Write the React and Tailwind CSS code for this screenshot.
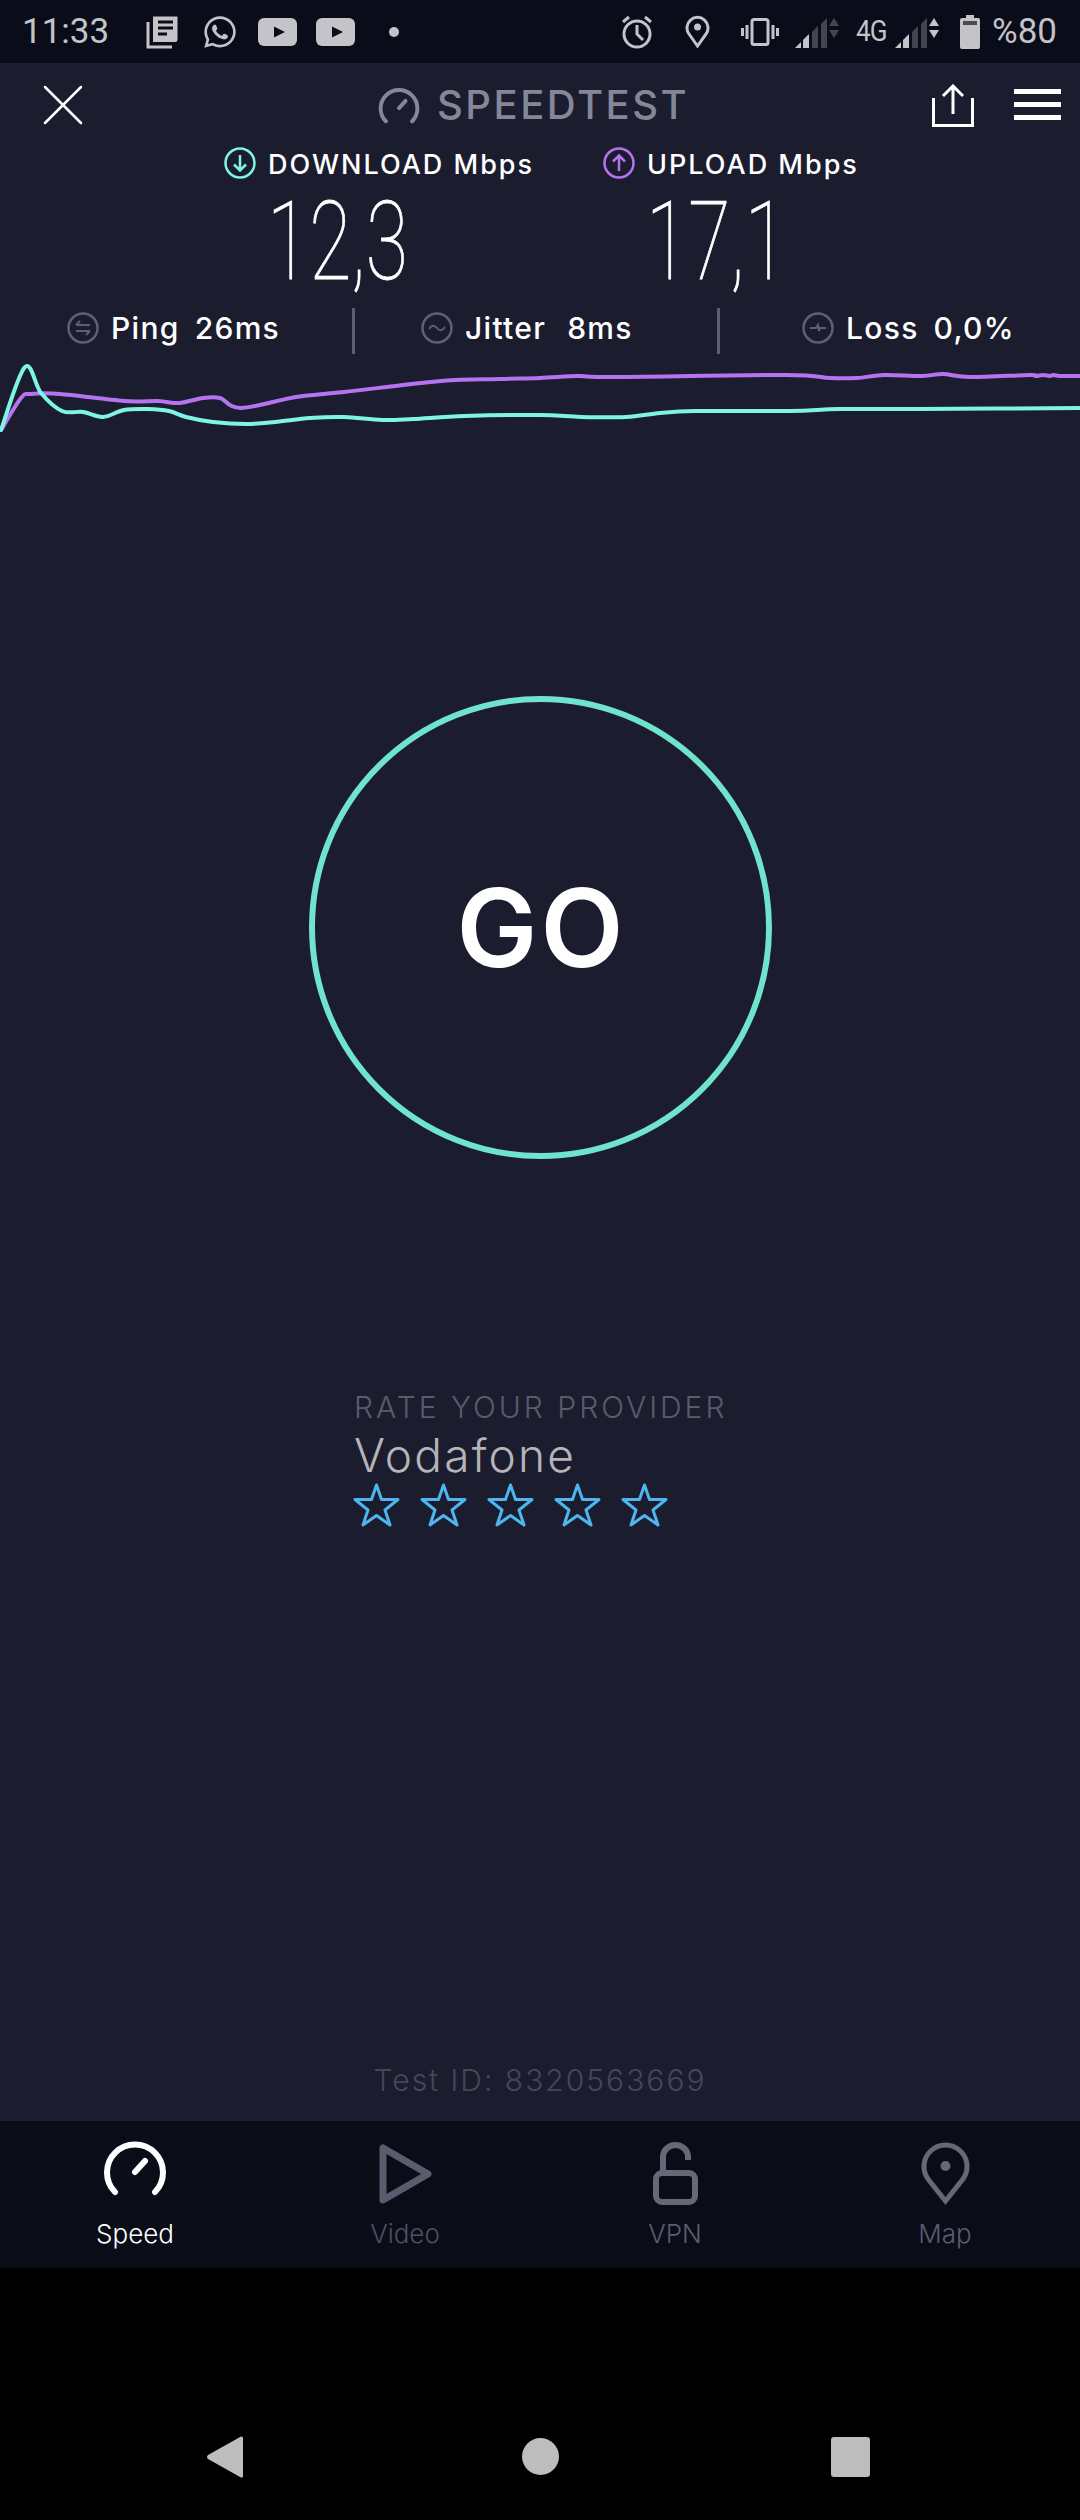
import { FaWhatsapp } from 'react-icons/fa';

const CYAN = [[1,430],[25,367],[41,393],[62,411],[83,412],[103,417],[124,410],[148,409],[169,411],[186,417],[213,422],[246,424],[275,422],[310,418],[344,417],[382,420],[413,419],[465,416],[540,415],[581,417],[626,417],[660,413],[695,411],[790,411],[840,409],[919,409],[1080,408]];
const PURPLE = [[1,430],[21,398],[31,394],[60,394],[124,401],[158,401],[179,403],[203,398],[220,398],[241,408],[296,397],[344,392],[441,381],[499,379],[540,378],[578,376],[610,377],[785,375],[830,378],[857,378],[884,375],[922,376],[943,374],[970,377],[1029,375],[1036,376],[1043,375],[1050,376],[1053,375],[1060,376],[1080,376]];

// smooth line through the points, y is page based so shift to chart top
const toPath = (pts) => {
  const p = pts.map(([x, y]) => [x, y - 360]);
  let d = `M${p[0][0]},${p[0][1]}`;
  for (let i = 0; i < p.length - 1; i++) {
    const a = p[i - 1] || p[i];
    const b = p[i];
    const c = p[i + 1];
    const e = p[i + 2] || c;
    d += ` C${b[0] + (c[0] - a[0]) / 6},${b[1] + (c[1] - a[1]) / 6} ${c[0] - (e[0] - b[0]) / 6},${c[1] - (e[1] - b[1]) / 6} ${c[0]},${c[1]}`;
  }
  return d;
};

const Gauge = ({ className }) => (
  <svg viewBox="0 0 64 56" className={className} fill="none" stroke="currentColor" strokeWidth="6" strokeLinecap="round">
    <path d="M12,52 A28,28 0 1 1 52,52" />
    <path d="M32,32 L42,21" />
  </svg>
);

const Youtube = () => (
  <svg viewBox="0 0 39 28" className="w-[39px] h-[28px]">
    <rect width="39" height="28" rx="6" fill="#c3c3c8" />
    <path d="M16,8.5 L27,14 L16,19.5 Z" fill="#0a0c1a" />
  </svg>
);

const Signal = ({ full }) => (
  <svg viewBox="0 0 44 33" className="w-[44px] h-[33px]">
    <path d="M0,33 L6,27 V33 Z" fill="#c3c3c8" />
    <path d="M8,25 L14,19 V33 H8 Z" fill="#c3c3c8" />
    <path d="M17,17 L23,11 V33 H17 Z" fill="#44454f" />
    <path d="M26,9 L32,3 V33 H26 Z" fill="#44454f" />
    <path d="M34,11 L39,3 L44,11 Z" fill={full ? '#c3c3c8' : '#44454f'} />
    <path d="M34,15 H44 L39,23 Z" fill={full ? '#c3c3c8' : '#44454f'} />
  </svg>
);

const StatusBar = () => (
  <div className="h-[63px] shrink-0 bg-[#0a0c1a] flex items-center text-[#c3c3c8] font-['Roboto',sans-serif]">
    <span className="ml-[22px] text-[35px] leading-none w-[124px]">11:33</span>
    <svg viewBox="0 0 33 34" className="w-[33px] h-[34px]" fill="none" stroke="#c3c3c8">
      <path d="M7,1.5 H31.5 V25 Q31.5,27 29,27 H7 Z" fill="#c3c3c8" stroke="none" />
      <path d="M12,7 H27 M12,13 H27 M12,19 H21" stroke="#0a0c1a" strokeWidth="3" />
      <path d="M2,7 V32 H26" strokeWidth="3" />
    </svg>
    <FaWhatsapp className="ml-[23px] w-[36px] h-[36px]" />
    <span className="ml-[20px]"><Youtube /></span>
    <span className="ml-[19px]"><Youtube /></span>
    <span className="ml-[34px] w-[10px] h-[10px] rounded-full bg-[#c3c3c8]" />
    <svg viewBox="0 0 32 34" className="ml-[222px] w-[32px] h-[34px]" fill="none" stroke="#c3c3c8" strokeWidth="3">
      <circle cx="16" cy="19" r="13" />
      <path d="M16,10 V19 L22,25 M2,7 L8,2 M30,7 L24,2" />
    </svg>
    <svg viewBox="0 0 25 33" className="ml-[32px] w-[25px] h-[33px]" fill="none" stroke="#c3c3c8" strokeWidth="3">
      <path d="M12.5,31 L4,19 A10.5,10.5 0 1 1 21,19 Z" />
      <circle cx="12.5" cy="12" r="3.5" fill="#c3c3c8" stroke="none" />
    </svg>
    <svg viewBox="0 0 38 28" className="ml-[31px] w-[38px] h-[28px]" fill="none" stroke="#c3c3c8" strokeWidth="3">
      <rect x="11" y="1.5" width="16" height="25" rx="2" />
      <path d="M6,7 V21 M1.5,10 V18 M32,7 V21 M36.5,10 V18" />
    </svg>
    <span className="ml-[16px]"><Signal /></span>
    <span className="ml-[17px] w-[34px] text-[29px] leading-none tracking-[-1px] scale-x-90 origin-left">4G</span>
    <span className="ml-[5px]"><Signal full /></span>
    <svg viewBox="0 0 20 34" className="ml-[21px] w-[20px] h-[34px]" fill="#c3c3c8">
      <path d="M6,0 H14 V3 H18 Q20,3 20,5 V32 Q20,34 18,34 H2 Q0,34 0,32 V5 Q0,3 2,3 H6 Z" />
      <rect x="3" y="6" width="14" height="4" fill="#4a4b55" />
    </svg>
    <span className="ml-[12px] text-[35px] leading-none">%80</span>
  </div>
);

const Toolbar = () => (
  <div className="h-[84px] flex items-center relative">
    <svg viewBox="0 0 40 40" className="ml-[43px] w-[40px] h-[40px]" stroke="white" strokeWidth="2.5" strokeLinecap="round">
      <path d="M2,2 L38,38 M38,2 L2,38" />
    </svg>
    <Gauge className="ml-[295px] w-[42px] h-[37px] text-[#84869a]" />
    <span className="ml-[17px] w-[495px] text-[40px] leading-none font-medium text-[#84869a] tracking-[2.5px]">SPEEDTEST</span>
    <svg viewBox="0 0 42 43" className="absolute left-[932px] top-[21px] w-[42px] h-[43px]" fill="none" stroke="white" strokeWidth="3">
      <path d="M1.5,14 V41.5 H40.5 V14 M21,30 V3 M11,12 L21,2 L31,12" />
    </svg>
    <div className="absolute left-[1014px] top-[26px] w-[47px] flex flex-col gap-[8px]">
      <div className="h-[5px] bg-white" />
      <div className="h-[5px] bg-white" />
      <div className="h-[5px] bg-white" />
    </div>
  </div>
);

const SpeedBlock = ({ up, label, value, className }) => (
  <div className={className}>
    <div className="flex items-center h-[31px]">
      <svg viewBox="0 0 32 32" className="w-[32px] h-[32px]" fill="none" stroke={up ? '#b673f0' : '#7ef5e4'} strokeWidth="2.5">
        <circle cx="16" cy="16" r="14.5" />
        {up ? <path d="M16,24 V9 M10,14.5 L16,8.5 L22,14.5" /> : <path d="M16,8 V23 M10,17.5 L16,23.5 L22,17.5" />}
      </svg>
      <span className="ml-[12px] pt-[3px] text-[27px] leading-none font-medium text-white whitespace-nowrap tracking-[2px]">{label}</span>
    </div>
    <div className="ml-[43px] mt-[17px] h-[93px] text-[110px] leading-[93px] font-thin text-white font-['Roboto',sans-serif] scale-x-[0.7] origin-left whitespace-nowrap [-webkit-text-stroke:0.8px_white]">{value}</div>
  </div>
);

const MetricIcon = ({ children }) => (
  <svg viewBox="0 0 32 32" className="w-[32px] h-[32px] shrink-0" fill="none" stroke="#5e6072" strokeWidth="2.5">
    <circle cx="16" cy="16" r="14.5" />
    {children}
  </svg>
);

const Metric = ({ className, icon, label, value, valueClass }) => (
  <div className={className}>
    <MetricIcon>{icon}</MetricIcon>
    <span className="ml-[12px] text-[30px] leading-none font-medium text-white tracking-[1.3px]">{label}</span>
    <span className={`text-[30px] leading-none font-medium text-white tracking-[1.3px] ${valueClass}`}>{value}</span>
  </div>
);

const Star = () => (
  <svg viewBox="0 0 47 44" className="w-[47px] h-[44px]" fill="none" stroke="#4db5f0" strokeWidth="3" strokeLinejoin="round">
    <path d="M23.5,2 L28.5,16.5 H45 L32,27 L37,42 L23.5,32.5 L10,42 L15,27 L2,16.5 H18.5 Z" />
  </svg>
);

const NAV = [
  {
    label: 'Speed',
    text: 'text-white',
    icon: <Gauge className="w-[64px] h-[56px] text-white" />,
    box: 'mt-[19px] h-[64px]',
  },
  {
    label: 'Video',
    text: 'text-[#4e5062]',
    icon: (
      <svg viewBox="0 0 53 60" className="w-[53px] h-[60px]" fill="none" stroke="#5a5c6e" strokeWidth="7" strokeLinejoin="round">
        <path d="M4,4 V56 L49,30 Z" />
      </svg>
    ),
    box: 'mt-[23px] h-[60px]',
  },
  {
    label: 'VPN',
    text: 'text-[#5a5c6e]',
    icon: (
      <svg viewBox="0 0 45 63" className="w-[45px] h-[63px]" fill="none" stroke="#666878" strokeWidth="6">
        <rect x="3" y="31" width="39" height="29" rx="6" />
        <path d="M10,30 V15 A12.5,12 0 0 1 35,15 V18" />
      </svg>
    ),
    box: 'mt-[21px] h-[62px]',
  },
  {
    label: 'Map',
    text: 'text-[#5a5c6e]',
    icon: (
      <svg viewBox="0 0 49 63" className="w-[49px] h-[63px]" fill="none" stroke="#666878" strokeWidth="5">
        <path d="M24.5,59 L7,37 A21.5,21.5 0 1 1 42,37 Z" strokeLinejoin="miter" />
        <circle cx="24.5" cy="24" r="5" fill="#666878" stroke="none" />
      </svg>
    ),
    box: 'mt-[21px] h-[62px]',
  },
];

export default function App() {
  return (
    <div className="w-[1080px] h-[2520px] flex flex-col bg-black font-['Inter',sans-serif] overflow-hidden">
      <StatusBar />

      <div className="h-[2058px] shrink-0 bg-[#1b1d2f] flex flex-col">
        <Toolbar />

        <div className="flex">
          <SpeedBlock label="DOWNLOAD Mbps" value="12,3" className="ml-[224px] w-[379px]" />
          <SpeedBlock up label="UPLOAD Mbps" value="17,1" className="w-[300px]" />
        </div>

        <div className="mt-[20px] h-[46px] flex items-stretch">
          <Metric
            className="w-[352px] pl-[67px] pb-[6px] flex items-center"
            label="Ping"
            value="26ms"
            valueClass="ml-[15px]"
            icon={<path d="M9,13 H23 M13,9 L9,13 M9,19 H23 M19,23 L23,19" strokeWidth="2" />}
          />
          <div className="w-[3px] bg-[#5e6072]" />
          <Metric
            className="w-[362px] pl-[66px] pb-[6px] flex items-center"
            label="Jitter"
            value="8ms"
            valueClass="ml-[21px]"
            icon={<path d="M8,17 Q12,11 16,16 T24,15" strokeWidth="2" />}
          />
          <div className="w-[3px] bg-[#5e6072]" />
          <Metric
            className="flex-1 pl-[82px] pb-[6px] flex items-center"
            label="Loss"
            value="0,0%"
            valueClass="ml-[15px]"
            icon={<path d="M8,16 H14 L16,13 L17,19 L18,16 H24" strokeWidth="2" />}
          />
        </div>

        <svg viewBox="0 0 1080 76" className="mt-[6px] w-[1080px] h-[76px]" fill="none" strokeWidth="4" strokeLinecap="round">
          <path d={toPath(PURPLE)} stroke="#b673f0" />
          <path d={toPath(CYAN)} stroke="#7ef5e4" />
        </svg>

        <div className="mt-[260px] self-center w-[463px] h-[463px] rounded-full border-[6px] border-[#6fe3cd] flex items-center justify-center">
          <span className="ml-[3px] text-[108px] leading-none font-semibold text-white tracking-[3px]">GO</span>
        </div>

        <div className="mt-[230px] ml-[353px] flex flex-col">
          <span className="ml-[1px] text-[30px] leading-[36px] font-light text-[#5a5b6b] whitespace-nowrap tracking-[3px]">RATE YOUR PROVIDER</span>
          <span className="ml-[1px] mt-[3px] text-[46px] leading-[55px] font-light text-[#b5b5b8] tracking-[2.2px]">Vodafone</span>
          <div className="flex gap-[20px]">
            <Star /><Star /><Star /><Star /><Star />
          </div>
        </div>

        <div className="mt-auto pb-[23px] text-center text-[30px] leading-[36px] font-light text-[#44465a] tracking-[2px]">Test ID: 8320563669</div>
      </div>

      <div className="h-[147px] shrink-0 bg-[#0a0d18] grid grid-cols-4">
        {NAV.map((item) => (
          <div key={item.label} className="flex flex-col items-center">
            <div className={`${item.box} flex items-start`}>{item.icon}</div>
            <span className={`mt-[14px] text-[26px] leading-[32px] font-light ${item.text}`}>{item.label}</span>
          </div>
        ))}
      </div>

      <div className="flex-1 relative">
        <svg viewBox="0 0 36 42" className="absolute left-[207px] top-[168px] w-[36px] h-[42px]" fill="#bdbdbd">
          <path d="M34,0.5 Q36,0 36,2 V40 Q36,42 34,41.5 L1,23 Q-1,21 1,19 Z" />
        </svg>
        <div className="absolute left-[522px] top-[170px] w-[37px] h-[37px] rounded-full bg-[#bdbdbd]" />
        <div className="absolute left-[831px] top-[169px] w-[39px] h-[40px] rounded-[3px] bg-[#bdbdbd]" />
      </div>
    </div>
  );
}
